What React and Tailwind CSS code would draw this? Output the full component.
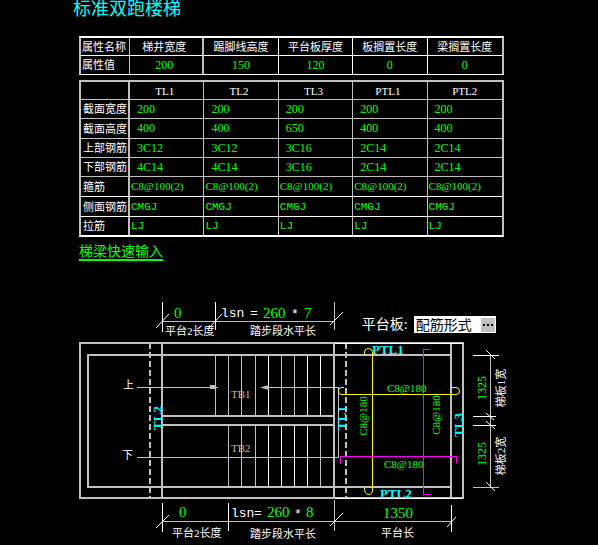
import React from "react";

const generalColumns = [
  { name: "梯井宽度", value: "200" },
  { name: "踢脚线高度", value: "150" },
  { name: "平台板厚度", value: "120" },
  { name: "板搁置长度", value: "0" },
  { name: "梁搁置长度", value: "0" },
];

const generalEdges = [
  "border-r-2 border-r-[#c0c0c0] pr-1",
  "border-r border-r-white",
  "border-r border-r-white",
  "border-r border-r-white",
  "",
];

const beams = ["TL1", "TL2", "TL3", "PTL1", "PTL2"];

const beamRows = [
  { name: "截面宽度", values: ["200", "200", "200", "200", "200"], row: "h-[19px]", line: "border-b border-b-[#c0c0c0]", cell: "pl-[7px] pb-px text-[12px]" },
  { name: "截面高度", values: ["400", "400", "650", "400", "400"], row: "h-[20px]", line: "border-b border-b-[#c0c0c0]", cell: "pl-[7px] pb-px text-[12px]" },
  { name: "上部钢筋", values: ["3C12", "3C12", "3C16", "2C14", "2C14"], row: "h-[19px]", line: "border-b border-b-[#c0c0c0]", cell: "pl-[7px] pb-px text-[12px]" },
  { name: "下部钢筋", values: ["4C14", "4C14", "3C16", "2C14", "2C14"], row: "h-[19px]", line: "border-b border-b-[#c0c0c0]", cell: "pl-[7px] pb-px text-[12px]" },
  { name: "箍筋", values: Array(5).fill("C8@100(2)"), row: "h-[20px]", line: "border-b border-b-white", cell: "pl-px pb-px text-[11px]" },
  { name: "侧面钢筋", values: Array(5).fill("CMGJ"), row: "h-[20px]", line: "border-b border-b-white", cell: "pl-px text-[11px] font-['Liberation_Mono',monospace]" },
  { name: "拉筋", values: Array(5).fill("LJ"), row: "h-[18px]", line: "", cell: "pl-px text-[11px] font-['Liberation_Mono',monospace]" },
];

function Columns() {
  return (
    <colgroup>
      <col className="w-[49px]" />
      <col />
      <col />
      <col />
      <col />
      <col />
    </colgroup>
  );
}

function GeneralTable() {
  return (
    <table className="w-full table-fixed border-separate border-spacing-0 border-x-2 border-t-2 border-b border-x-[#c0c0c0] border-y-white text-[11px] leading-3">
      <Columns />
      <tbody>
        <tr className="h-[18px]">
          <th scope="row" className="whitespace-nowrap border-r border-b border-r-[#c0c0c0] border-b-white p-0 pl-px text-left font-normal">
            属性名称
          </th>
          {generalColumns.map((c, i) => (
            <td key={c.name} className={"whitespace-nowrap border-b border-b-white text-center " + generalEdges[i]}>
              {c.name}
            </td>
          ))}
        </tr>
        <tr className="h-[18px]">
          <th scope="row" className="border-r border-r-[#c0c0c0] p-0 pl-px text-left font-normal">
            属性值
          </th>
          {generalColumns.map((c, i) => (
            <td key={c.name} className={"pb-px text-center text-[12px] text-[#00ff00] " + generalEdges[i]}>
              {c.value}
            </td>
          ))}
        </tr>
      </tbody>
    </table>
  );
}

function BeamTable() {
  return (
    <table className="mt-[5px] w-full table-fixed border-separate border-spacing-0 border-2 border-[#c0c0c0] border-b-white text-[11px] leading-3">
      <Columns />
      <thead>
        <tr className="h-[18px]">
          <td className="border-r-2 border-b border-[#c0c0c0] p-0" />
          {beams.map((b) => (
            <th key={b} scope="col" className="border-r border-b border-[#c0c0c0] p-0 pr-1 text-center font-normal last:border-r-0 last:pr-0">
              {b}
            </th>
          ))}
        </tr>
      </thead>
      <tbody>
        {beamRows.map((r) => (
          <tr key={r.name} className={r.row}>
            <th scope="row" className={"whitespace-nowrap border-r-2 border-r-[#c0c0c0] p-0 pl-[2px] text-left font-normal " + r.line}>
              {r.name}
            </th>
            {r.values.map((v, i) => (
              <td
                key={beams[i]}
                className={"whitespace-nowrap border-r border-r-[#c0c0c0] text-left text-[#00ff00] last:border-r-0 " + r.line + " " + r.cell}
              >
                {v}
              </td>
            ))}
          </tr>
        ))}
      </tbody>
    </table>
  );
}

const upperTreads = [
  [215, "#c0c0c0"], [228, "#c0c0c0"], [241, "#c0c0c0"], [255, "#c0c0c0"], [268, "#fff"],
  [281, "#c0c0c0"], [294, "#c0c0c0"], [307, "#fff"], [320, "#fff"],
];
const lowerTreads = [
  [228, "#c0c0c0"], [241, "#c0c0c0"], [255, "#c0c0c0"], [268, "#fff"],
  [281, "#fff"], [294, "#fff"], [307, "#fff"], [320, "#c0c0c0"],
];

function Upright({ x, y, className, children }) {
  return (
    <text transform={`translate(${x} ${y}) rotate(-90)`} textAnchor="middle" className={className}>
      {children}
    </text>
  );
}

function StairPlan() {
  return (
    <svg viewBox="0 300 598 245" className="block w-full" role="img" aria-label="标准双跑楼梯">
      {/* walls */}
      <g fill="none" stroke="#c0c0c0" strokeWidth="2" shapeRendering="crispEdges">
        <path d="M80 342V499M79 343H464M463 342V499M79 498H464" />
        <path d="M451 355H88V487H451M451 343V498" />
        <path d="M162 343V498M334 343V498M162 416H334M162 425H334" />
        <path d="M150 343V498M346 343V498" strokeDasharray="6 3" />
        <path d="M335 343.5H463M335 498.5H463" stroke="#fff" strokeWidth="1" />
      </g>

      {/* treads */}
      <g strokeWidth="1" shapeRendering="crispEdges">
        {upperTreads.map(([x, c]) => (
          <line key={x} x1={x + 0.5} x2={x + 0.5} y1="356" y2="415" stroke={c} />
        ))}
        {lowerTreads.map(([x, c]) => (
          <line key={x} x1={x + 0.5} x2={x + 0.5} y1="426" y2="486" stroke={c} />
        ))}
      </g>

      {/* walking line */}
      <path d="M137 387.5H218M262 387.5H338.5V457.5H137" fill="none" stroke="#c0c0c0" shapeRendering="crispEdges" />
      <path d="M210 385H214L216 386V389H210ZM260 387.5L269 385V390Z" fill="#c0c0c0" />

      {/* dimensions along the top and bottom */}
      <g fill="none" stroke="#c0c0c0" shapeRendering="crispEdges">
        <path d="M162 321.5H335M334.5 302V330M162 521.5H452M334.5 500V531" />
        <path d="M162.5 302V332M215.5 302V330M162.5 503V532M228.5 503V531M451.5 505V532" stroke="#fff" />
      </g>
      <path
        d="M156 328L169 314M209 328L222 314M330 325L343 312M156 528L169 515M330 526L343 513M447 527L456 517"
        stroke="#fff"
      />

      {/* dimensions on the right */}
      <g fill="none" shapeRendering="crispEdges">
        <path d="M490.5 355V488M473 487.5H499" stroke="#c0c0c0" />
        <path d="M473 355.5H499M473 416.5H496M473 425.5H496" stroke="#fff" />
      </g>
      <path d="M486 350L495 359M486 413L494 420M486 421L495 429M486 482L495 491" stroke="#fff" />

      {/* reinforcement */}
      <path
        d="M364.5 355V352Q364.5 348.5 368.5 348.5Q372.5 348.5 372.5 352V490Q372.5 494.5 368.5 494.5Q364.5 494.5 364.5 488"
        fill="none"
        stroke="#ff0"
      />
      <path
        d="M344 387.5H341Q338.5 388 338.5 391Q338.5 394.5 341 394.5H456Q459.5 394.5 459.5 391Q459.5 387.5 456 387.5H452"
        fill="none"
        stroke="#ff0"
      />
      <path
        d="M430 349.5H423.5V494.5H431M340.5 464V456.5H456.5V463"
        fill="none"
        stroke="#f0f"
        shapeRendering="crispEdges"
      />

      <g fill="#fff" className="text-[11px]">
        <text x="123" y="389">上</text>
        <text x="122" y="459">下</text>
        <text x="165" y="335">平台2长度</text>
        <text x="250" y="335">踏步段水平长</text>
        <text x="172" y="537">平台2长度</text>
        <text x="250" y="538">踏步段水平长</text>
        <text x="381" y="537">平台长</text>
        <Upright x={505} y={388}>梯板1宽</Upright>
        <Upright x={505} y={456}>梯板2宽</Upright>
      </g>
      <g fill="#c8b8a0" className="text-[11px]">
        <text x="231" y="398">TB1</text>
        <text x="231" y="452">TB2</text>
      </g>

      <g fill="#fff" className="font-['Liberation_Mono',monospace] text-[13px]">
        <text x="221" y="317">lsn</text>
        <text x="250" y="317">=</text>
        <text x="291" y="318">*</text>
        <text x="231" y="517">lsn</text>
        <text x="254" y="517">=</text>
        <text x="294" y="518">*</text>
      </g>
      <g fill="#0f0" className="text-[15px]">
        <text x="174" y="318">0</text>
        <text x="263" y="318">260</text>
        <text x="304" y="318">7</text>
        <text x="179" y="517">0</text>
        <text x="267" y="517">260</text>
        <text x="306" y="517">8</text>
        <text x="383" y="518">1350</text>
      </g>
      <g fill="#0f0" className="text-[11px]">
        <text x="387" y="392">C8@180</text>
        <text x="384" y="468">C8@180</text>
        <Upright x={367} y={416}>C8@180</Upright>
        <Upright x={440} y={415}>C8@180</Upright>
      </g>
      <g fill="#0f0" className="text-[12px]">
        <Upright x={486} y={388}>1325</Upright>
        <Upright x={486} y={454}>1325</Upright>
      </g>
      <g fill="#0ff" className="text-[13px] font-bold">
        <text x="372" y="354">PTL1</text>
        <text x="380" y="498">PTL2</text>
        <Upright x={162} y={418}>TL2</Upright>
        <Upright x={346} y={418}>TL1</Upright>
        <Upright x={463} y={425}>TL3</Upright>
      </g>
    </svg>
  );
}

export default function App() {
  return (
    <main className="min-h-screen bg-black font-['Liberation_Serif','Noto_Sans_CJK_SC',serif] text-white">
      <div className="pr-[94px] pl-[79px]">
        <h1 className="-ml-1.5 h-9 text-[18px] leading-[18px] text-[#00ffff]">标准双跑楼梯</h1>
        <GeneralTable />
        <BeamTable />
        <div className="flex h-[63px] items-start pt-2">
          <a href="#beams" className="border-b-2 border-[#00ff00] text-[14px] leading-[14px] text-[#00ff00]">
            梯梁快速输入
          </a>
        </div>
      </div>
      <section className="relative">
        <StairPlan />
        <div className="absolute top-4 left-[60%] flex h-[17px] items-center pl-[3px] text-[14px] leading-4">
          <label htmlFor="slab" className="w-[52px] whitespace-nowrap">
            平台板:
          </label>
          <div className="flex h-[17px] w-[82px] items-center bg-white pr-px">
            <input
              id="slab"
              readOnly
              defaultValue="配筋形式"
              className="h-[17px] w-full min-w-0 bg-transparent pb-[2px] pl-[2px] text-black outline-none"
            />
            <button type="button" aria-label="选择配筋形式" className="flex h-[14px] w-[14px] shrink-0 items-center justify-center gap-[2px] bg-[#c0c0c0]">
              <span className="size-[2px] bg-black" />
              <span className="size-[2px] bg-black" />
              <span className="size-[2px] bg-black" />
            </button>
          </div>
        </div>
      </section>
    </main>
  );
}
